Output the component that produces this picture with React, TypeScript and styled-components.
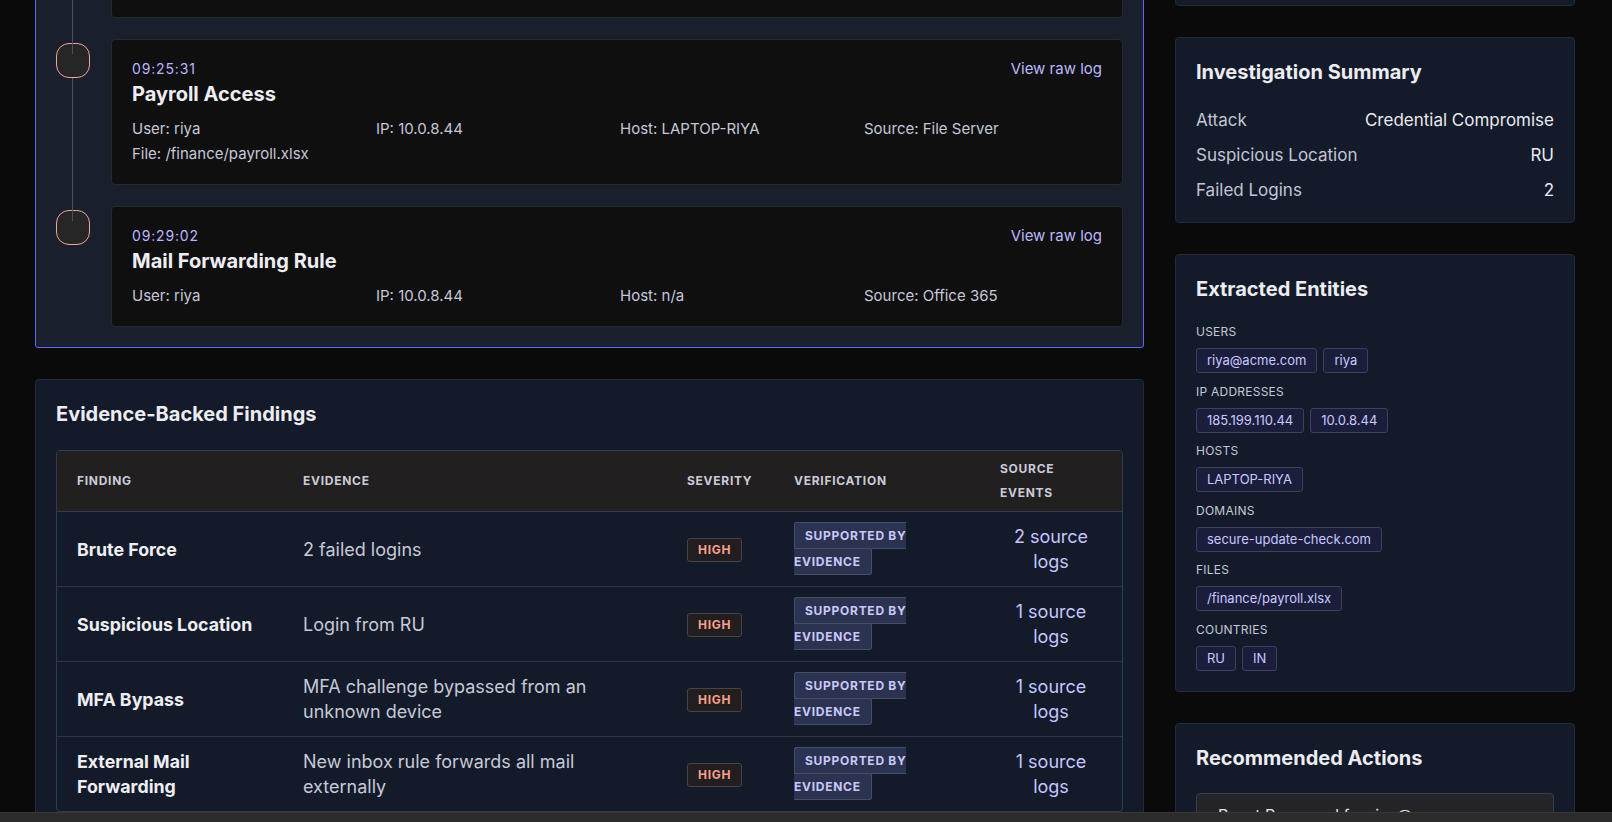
import styled, { createGlobalStyle } from "styled-components";

type TEvent = {
  time: string;
  title: string;
  user: string;
  ip: string;
  host: string;
  source: string;
  file?: string;
};

const events: TEvent[] = [
  {
    time: "09:22:47",
    title: "Suspicious Login",
    user: "riya@acme.com",
    ip: "185.199.110.44",
    host: "n/a",
    source: "Azure AD",
  },
  {
    time: "09:25:31",
    title: "Payroll Access",
    user: "riya",
    ip: "10.0.8.44",
    host: "LAPTOP-RIYA",
    source: "File Server",
    file: "/finance/payroll.xlsx",
  },
  {
    time: "09:29:02",
    title: "Mail Forwarding Rule",
    user: "riya",
    ip: "10.0.8.44",
    host: "n/a",
    source: "Office 365",
  },
];

const findings = [
  { name: "Brute Force", evidence: "2 failed logins", count: 2 },
  { name: "Suspicious Location", evidence: "Login from RU", count: 1 },
  {
    name: "MFA Bypass",
    evidence: "MFA challenge bypassed from an unknown device",
    count: 1,
  },
  {
    name: "External Mail Forwarding",
    evidence: "New inbox rule forwards all mail externally",
    count: 1,
  },
];

const summary = [
  { label: "Attack", value: "Credential Compromise" },
  { label: "Suspicious Location", value: "RU" },
  { label: "Failed Logins", value: "2" },
];

const entities = [
  { label: "Users", items: ["riya@acme.com", "riya"] },
  { label: "IP Addresses", items: ["185.199.110.44", "10.0.8.44"] },
  { label: "Hosts", items: ["LAPTOP-RIYA"] },
  { label: "Domains", items: ["secure-update-check.com"] },
  { label: "Files", items: ["/finance/payroll.xlsx"] },
  { label: "Countries", items: ["RU", "IN"] },
];

const actions = [
  "Reset Password for riya@acme.com",
  "Remove inbox forwarding rule",
  "Block 185.199.110.44",
];

const App = () => {
  return (
    <>
      <GlobalStyle />
      <Viewport>
        <Page>
          <LeftColumn>
            <TimelinePanel>
              {events.map((ev, i) => (
                <TimelineItem key={ev.time} $z={events.length - i}>
                  <Marker $first={i === 0} />
                  <EventCard>
                    <EventHead>
                      <div>
                        <EventTime>{ev.time}</EventTime>
                        <EventTitle>{ev.title}</EventTitle>
                      </div>
                      <RawLink href="#">View raw log</RawLink>
                    </EventHead>
                    <MetaGrid>
                      <span>User: {ev.user}</span>
                      <span>IP: {ev.ip}</span>
                      <span>Host: {ev.host}</span>
                      <span>Source: {ev.source}</span>
                      {ev.file && <span>File: {ev.file}</span>}
                    </MetaGrid>
                  </EventCard>
                </TimelineItem>
              ))}
            </TimelinePanel>

            <Panel>
              <PanelTitle $gap={22}>Evidence-Backed Findings</PanelTitle>
              <TableWrap>
                <Table>
                  <colgroup>
                    <col style={{ width: 226 }} />
                    <col style={{ width: 384 }} />
                    <col style={{ width: 107 }} />
                    <col style={{ width: 206 }} />
                    <col style={{ width: 142 }} />
                  </colgroup>
                  <thead>
                    <tr>
                      <Th>Finding</Th>
                      <Th>Evidence</Th>
                      <Th>Severity</Th>
                      <Th>Verification</Th>
                      <Th>Source Events</Th>
                    </tr>
                  </thead>
                  <tbody>
                    {findings.map((f) => (
                      <tr key={f.name}>
                        <FindingCell>{f.name}</FindingCell>
                        <EvidenceCell>{f.evidence}</EvidenceCell>
                        <Td>
                          <SeverityBadge>High</SeverityBadge>
                        </Td>
                        <Td>
                          <VerifyWrap>
                            <VerifyBadge>Supported by evidence</VerifyBadge>
                          </VerifyWrap>
                        </Td>
                        <SourceCell>{f.count} source logs</SourceCell>
                      </tr>
                    ))}
                  </tbody>
                </Table>
              </TableWrap>
            </Panel>
          </LeftColumn>

          <RightColumn>
            <Panel>
              <PanelTitle>Risk Score</PanelTitle>
              <ScoreValue>92 / 100</ScoreValue>
            </Panel>

            <Panel $tight>
              <PanelTitle>Investigation Summary</PanelTitle>
              {summary.map((row) => (
                <SummaryRow key={row.label}>
                  <SummaryLabel>{row.label}</SummaryLabel>
                  <SummaryValue>{row.value}</SummaryValue>
                </SummaryRow>
              ))}
            </Panel>

            <Panel>
              <PanelTitle $gap={21}>Extracted Entities</PanelTitle>
              {entities.map((group) => (
                <EntityGroup key={group.label}>
                  <EntityLabel>{group.label}</EntityLabel>
                  <ChipRow>
                    {group.items.map((item) => (
                      <Chip key={item}>{item}</Chip>
                    ))}
                  </ChipRow>
                </EntityGroup>
              ))}
            </Panel>

            <Panel>
              <PanelTitle $gap={21}>Recommended Actions</PanelTitle>
              <ActionList>
                {actions.map((a) => (
                  <ActionItem key={a}>{a}</ActionItem>
                ))}
              </ActionList>
            </Panel>
          </RightColumn>
        </Page>
      </Viewport>
      <ScrollTrack />
    </>
  );
};

export default App;

const GlobalStyle = createGlobalStyle`
  * {
    box-sizing: border-box;
  }
  html, body {
    margin: 0;
    padding: 0;
    background: #0a0a0b;
    overflow: hidden;
  }
  body {
    font-family: Inter, "Noto Sans", sans-serif;
    color: #ebebf1;
  }
`;

const Viewport = styled.div`
  height: 100vh;
  overflow: hidden;
`;

/* page is scrolled down: top of the content sits above the window */
const Page = styled.main`
  display: grid;
  grid-template-columns: 1109px 400px;
  column-gap: 31px;
  align-items: start;
  padding-left: 35px;
  margin-top: -124px;
`;

const LeftColumn = styled.div`
  display: flex;
  flex-direction: column;
  gap: 31px;
`;

const RightColumn = styled.div`
  display: flex;
  flex-direction: column;
  gap: 31px;
`;

const Panel = styled.section<{ $tight?: boolean }>`
  background: #131a2a;
  border: 1px solid #222a3b;
  border-radius: 4px;
  padding: ${({ $tight }) => ($tight ? "20px 20px 15px" : "20px")};
`;

const PanelTitle = styled.h2<{ $gap?: number }>`
  margin: 0 0 ${({ $gap }) => $gap ?? 16}px;
  font-size: 20px;
  line-height: 28px;
  font-weight: 700;
  color: #ececf2;
`;

const ScoreValue = styled.div`
  font-size: 36px;
  line-height: 44px;
  font-weight: 700;
  color: #ff9e8a;
`;

const TimelinePanel = styled.section`
  background: #1a1f2e;
  border: 1px solid #6366f1;
  border-radius: 3px;
  padding: 20px;
  display: flex;
  flex-direction: column;
  gap: 21px;
`;

const TimelineItem = styled.div<{ $z: number }>`
  position: relative;
  z-index: ${({ $z }) => $z};
  display: grid;
  grid-template-columns: 34px 1fr;
  column-gap: 21px;
  align-items: start;
`;

const Marker = styled.div<{ $first: boolean }>`
  position: relative;
  width: 34px;
  height: 35px;
  margin-top: 4px;
  border-radius: 13px;
  background: #262627;
  border: 1px solid #f3a397;

  &::before {
    content: "";
    display: ${({ $first }) => ($first ? "none" : "block")};
    position: absolute;
    left: 15px;
    top: -300px;
    width: 1px;
    height: 310px;
    background: #4c5065;
  }
`;

const EventCard = styled.div`
  background: #0f0f10;
  border: 1px solid #27282c;
  border-radius: 4px;
  padding: 19px 20px 18px;
`;

const EventHead = styled.div`
  display: flex;
  justify-content: space-between;
  align-items: flex-start;
`;

const EventTime = styled.div`
  font-size: 14px;
  line-height: 20px;
  letter-spacing: 0.06em;
  color: #b8b6fb;
`;

const EventTitle = styled.h3`
  margin: 2px 0 0;
  font-size: 20px;
  line-height: 26px;
  font-weight: 700;
  color: #ededf2;
`;

const RawLink = styled.a`
  font-size: 15px;
  line-height: 20px;
  color: #bbb9fb;
  text-decoration: none;
`;

const MetaGrid = styled.div`
  display: grid;
  grid-template-columns: repeat(4, 1fr);
  column-gap: 6px;
  row-gap: 1px;
  margin-top: 10px;
  font-size: 15px;
  line-height: 24px;
  color: #c6c8d6;
`;

const TableWrap = styled.div`
  border: 1px solid #323a4d;
  border-radius: 4px;
  overflow: hidden;
`;

const Table = styled.table`
  width: 100%;
  table-layout: fixed;
  border-collapse: separate;
  border-spacing: 0;

  tbody tr + tr td {
    border-top: 1px solid #2f3547;
  }
`;

const Th = styled.th`
  background: #211f20;
  border-bottom: 1px solid #343a4c;
  padding: 6px 20px;
  text-align: left;
  font-size: 12px;
  line-height: 24px;
  font-weight: 700;
  letter-spacing: 0.06em;
  text-transform: uppercase;
  color: #cbcbd8;
`;

const Td = styled.td`
  padding: 11px 20px;
  vertical-align: middle;
  font-size: 17px;
  line-height: 25px;
`;

const FindingCell = styled(Td)`
  font-size: 17.8px;
  font-weight: 700;
  color: #eeeef3;
`;

const EvidenceCell = styled(Td)`
  font-size: 18px;
  color: #c7c9d6;
`;

const SourceCell = styled(Td)`
  font-size: 18px;
  text-align: center;
  color: #c6c5fd;
`;

const SeverityBadge = styled.span`
  display: inline-block;
  padding: 3px 10px;
  font-size: 12px;
  line-height: 16px;
  font-weight: 700;
  letter-spacing: 0.06em;
  text-transform: uppercase;
  color: #f7a08d;
  background: #221d1f;
  border: 1px solid #4a4344;
  border-radius: 3px;
`;

const VerifyWrap = styled.div`
  font-size: 12px;
  line-height: 26px;
`;

const VerifyBadge = styled.span`
  padding: 5px 10px;
  font-size: 12px;
  font-weight: 700;
  letter-spacing: 0.06em;
  text-transform: uppercase;
  color: #c9c8fb;
  background: #2c3350;
  border: 1px solid #464d6a;
  border-radius: 3px;
`;

const SummaryRow = styled.div`
  display: flex;
  justify-content: space-between;
  align-items: center;
  padding: 5.5px 0;
  font-size: 17px;
  line-height: 24px;
`;

const SummaryLabel = styled.span`
  color: #c3c5d4;
`;

const SummaryValue = styled.span`
  color: #e9e9f1;
`;

const EntityGroup = styled.div`
  & + & {
    margin-top: 10.5px;
  }
`;

const EntityLabel = styled.div`
  font-size: 12px;
  line-height: 16px;
  text-transform: uppercase;
  letter-spacing: 0.02em;
  color: #c6c8d5;
`;

const ChipRow = styled.div`
  display: flex;
  flex-wrap: wrap;
  gap: 6px;
  margin-top: 8px;
`;

const Chip = styled.span`
  padding: 3px 10px;
  font-size: 13px;
  line-height: 17px;
  color: #cac8ff;
  background: #1b1e3b;
  border: 1px solid #3d4160;
  border-radius: 3px;
`;

const ActionList = styled.div`
  display: flex;
  flex-direction: column;
  gap: 10px;
`;

const ActionItem = styled.div`
  padding: 10px 21px;
  font-size: 16px;
  line-height: 22px;
  color: #e2e2ea;
  background: #232328;
  border: 1px solid #3c3c44;
  border-radius: 4px;
`;

/* horizontal scrollbar of the window, drawn over the page bottom */
const ScrollTrack = styled.div`
  position: fixed;
  left: 0;
  right: 0;
  bottom: 0;
  height: 10px;
  background: #2c2c2d;
  border-top: 1px solid #383839;
`;
